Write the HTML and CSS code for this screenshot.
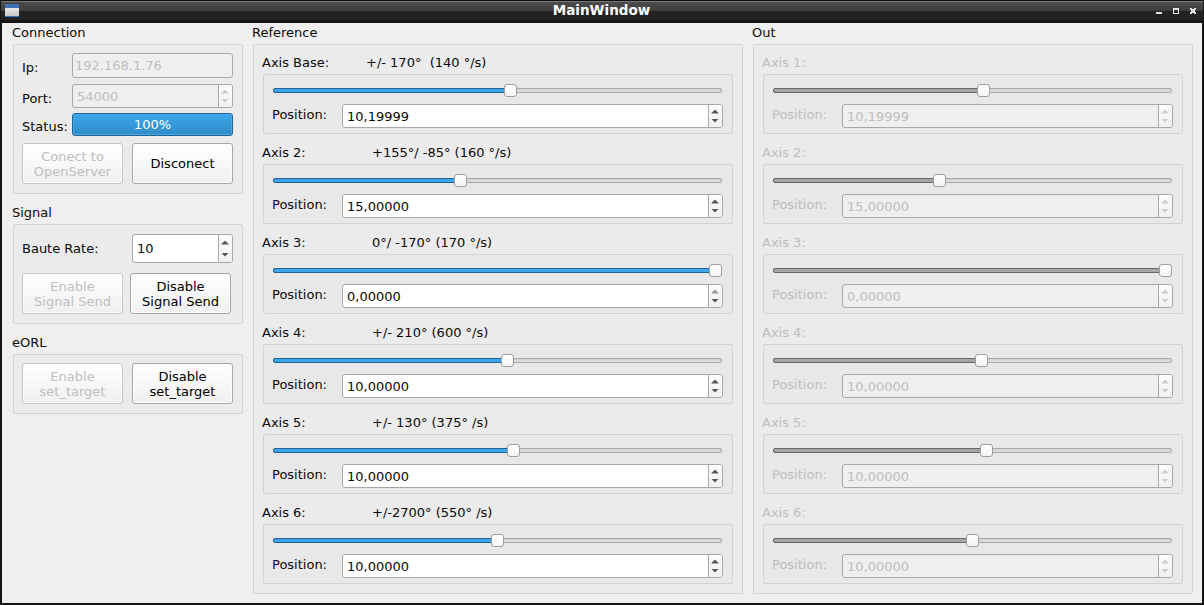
FILE: index.html
```html
<!DOCTYPE html>
<html lang="en">
<head>
<meta charset="utf-8">
<title>MainWindow</title>
<link rel="stylesheet" href="styles.css">
</head>
<body>
<div class="window">
  <header class="titlebar">
    <span class="app-icon"></span>
    <span class="title">MainWindow</span>
    <svg class="controls" width="42" height="8" viewBox="0 0 42 8" shape-rendering="crispEdges" fill="#e2e2dc">
      <path d="M0 4h6v2H0z"/>
      <path fill-rule="evenodd" d="M17 0h6v6h-6zM18 2v3h4V2z"/>
      <path d="M34 0h2v1h2V0h2v2h-1v2h1v2h-2V5h-2v1h-2V4h1V2h-1z"/>
    </svg>
  </header>
  <main class="content">
    <div class="side">
      <section class="group">
        <h2 class="group-title">Connection</h2>
        <div class="frame connection">
          <div class="row row-ip"><label class="name">Ip:</label><div class="field disabled ip">192.168.1.76</div></div>
          <div class="row row-port"><label class="name">Port:</label><div class="field disabled spin"><span class="value">54000</span><span class="steps"><i class="up"></i><i class="down"></i></span></div></div>
          <div class="row row-status"><label class="name">Status:</label><div class="progress">100%</div></div>
          <div class="buttons"><button class="button" disabled>Conect to<br>OpenServer</button><button class="button">Disconect</button></div>
        </div>
      </section>
      <section class="group">
        <h2 class="group-title">Signal</h2>
        <div class="frame signal">
          <div class="row row-rate"><label class="name wide">Baute Rate:</label><div class="field spin"><span class="value">10</span><span class="steps"><i class="up"></i><i class="down"></i></span></div></div>
          <div class="buttons tight"><button class="button" disabled>Enable<br>Signal Send</button><button class="button">Disable<br>Signal Send</button></div>
        </div>
      </section>
      <section class="group">
        <h2 class="group-title">eORL</h2>
        <div class="frame eorl">
          <div class="buttons"><button class="button" disabled>Enable<br>set_target</button><button class="button">Disable<br>set_target</button></div>
        </div>
      </section>
    </div>
    <section class="group reference">
      <h2 class="group-title">Reference</h2>
      <div class="frame axes" id="reference"></div>
    </section>
    <section class="group out">
      <h2 class="group-title">Out</h2>
      <div class="frame axes" id="out"></div>
    </section>
  </main>
</div>
<script src="app.js"></script>
</body>
</html>
```
FILE: app.js
```js
// Each axis: label, range text, displayed position, slider fill in pixels.
const reference = [
  ['Axis Base:', '+/- 170°\u00a0 (140 °/s)', '10,19999', 231],
  ['Axis 2:', '+155°/ -85° (160 °/s)', '15,00000', 181],
  ['Axis 3:', '0°/ -170° (170 °/s)', '0,00000', 436],
  ['Axis 4:', '+/- 210° (600 °/s)', '10,00000', 228],
  ['Axis 5:', '+/- 130° (375° /s)', '10,00000', 234],
  ['Axis 6:', '+/-2700° (550° /s)', '10,00000', 218],
];
const out = [
  ['Axis 1:', '', '10,19999', 204],
  ['Axis 2:', '', '15,00000', 160],
  ['Axis 3:', '', '0,00000', 386],
  ['Axis 4:', '', '10,00000', 202],
  ['Axis 5:', '', '10,00000', 207],
  ['Axis 6:', '', '10,00000', 193],
];

function render(id, axes, disabled) {
  const off = disabled ? ' disabled' : '';
  document.getElementById(id).innerHTML = axes.map(([name, range, value, fill], i) => `
    <section class="group axis${off}">
      <h3 class="group-title"><span class="axis-name${i === 0 ? ' base' : ''}">${name}</span><span class="range">${range}</span></h3>
      <div class="frame inner">
        <div class="slider"><div class="groove"><div class="fill" style="width:${fill + 5}px"></div></div><span class="handle" style="left:${fill}px"></span></div>
        <div class="position"><label class="name">Position:</label><div class="field spin${off}"><span class="value">${value}</span><span class="steps"><i class="up${value === '0,00000' ? ' max' : ''}"></i><i class="down"></i></span></div></div>
      </div>
    </section>`).join('');
}

render('reference', reference, false);
render('out', out, true);
```
FILE: styles.css
```css
* { box-sizing: border-box; }
body {
  margin: 0;
  font: 13px/15px "DejaVu Sans", sans-serif;
  color: #0a0a0a;
}
.window {
  width: 1204px;
  height: 605px;
  display: flex;
  flex-direction: column;
  background: #151515;
  padding: 0 2px 2px;
  overflow: hidden;
}
.titlebar {
  flex: none;
  height: 23px;
  margin: 0 -1px;
  padding: 0 5px 0 4px;
  display: flex;
  align-items: flex-start;
  background: linear-gradient(#101010 0 1px, #777 1px 2px, #4d4d4d 2px, #3c3c3c 11px, #222 11px 20px, #151515 20px);
}
.app-icon {
  width: 14px;
  height: 13px;
  margin-top: 4px;
  background: linear-gradient(#3f6fb4 0 4px, #e6e6e6 4px, #c8c8c8 12px, #3f6fb4 12px);
}
.title {
  flex: 1;
  padding: 3px 0 0 28px;
  text-align: center;
  font-weight: bold;
  font-size: 13.5px;
  line-height: 14px;
  color: #fff;
}
.controls { margin-top: 8px; }
.content {
  flex: 1;
  display: flex;
  gap: 9px;
  padding: 0 9px 9px 10px;
  background: #efefef;
}
.side, .axes {
  display: flex;
  flex-direction: column;
  gap: 9px;
}
.side { width: 231px; }
.reference { width: 491px; }
.out { width: 441px; }
.group-title {
  margin: 0;
  height: 21px;
  padding-top: 2px;
  display: flex;
  font-size: 13px;
  font-weight: normal;
}
.frame {
  margin-left: 1px;
  padding: 8px 9px 8px 8px;
  border: 1px solid #d3d3d3;
  border-radius: 2px;
  background: #ebebeb;
}
.connection { height: 150px; }
.signal { height: 100px; padding-top: 9px; }
.eorl { height: 60px; }
.row { display: flex; }
.row .name { width: 50px; }
.row .name.wide { width: 110px; padding-top: 7px; }
.row .field, .row .progress { flex: 1; }
.row-ip { height: 25px; margin-bottom: 6px; }
.row-ip .name { padding-top: 7px; }
.row-port { height: 24px; margin-bottom: 5px; }
.row-port .name { padding-top: 7px; }
.row-status { height: 23px; margin-bottom: 7px; }
.row-status .name { padding-top: 6px; }
.row-rate { height: 29px; margin-bottom: 10px; }
.field {
  border: 1px solid #a8a8a8;
  border-radius: 3px;
  background: #fff;
}
.field.disabled { background: #efefef; color: #bebebe; }
.ip { padding: 4px 0 0 2px; }
.spin { display: flex; align-items: stretch; }
.value { flex: 1; align-self: center; padding: 1px 0 0 4px; }
.row-rate .value { padding-top: 0; }
.steps {
  width: 15px;
  padding-right: 1px;
  border-left: 1px solid #a8a8a8;
  border-radius: 0 2px 2px 0;
  background: linear-gradient(#fdfdfd, #f0f0f0);
  display: flex;
  flex-direction: column;
  align-items: center;
  justify-content: center;
  gap: 5px;
}
.row-rate .steps { gap: 8px; }
.steps { width: 14px; padding-right: 1px; }
.up, .down {
  width: 8px;
  height: 4px;
  background: #555;
}
.up { clip-path: polygon(50% 0, 100% 100%, 0 100%); }
.down { clip-path: polygon(0 0, 100% 0, 50% 100%); }
.disabled .up, .disabled .down { background: #ccc; }
.up.max { background: #999; }
.disabled .up.max { background: #ccc; }
.progress {
  border: 1px solid #1f6396;
  border-radius: 3px;
  background: linear-gradient(#3ba6ec, #308cc6);
  box-shadow: inset 0 0 0 1px #4ba8e2;
  color: #fff;
  text-align: center;
  padding-top: 3px;
}
.buttons { display: flex; gap: 9px; }
.buttons.tight { gap: 7px; }
.button {
  flex: none;
  width: 101px;
  height: 41px;
  padding: 0;
  border: 1px solid #a8a8a8;
  border-radius: 3px;
  background: linear-gradient(#fff, #f0f0f0);
  box-shadow: inset 0 0 0 1px #fbfbfb;
  font: inherit;
  color: #000;
}
.button:disabled { color: #bebebe; border-color: #c6c6c6; }
.axes { height: 550px; }
.axis.disabled { color: #bebebe; }
.axis-name { width: 110px; }
.axis-name.base { width: 104px; }
.inner {
  height: 60px;
  padding: 9px 9px 0 8px;
  background: #e8e8e8;
}
.slider {
  position: relative;
  height: 13px;
  margin-left: 1px;
  padding-top: 4px;
  margin-right: 1px;
}
.groove {
  height: 5px;
  border: 1px solid #a8a8a8;
  border-radius: 2px;
  background: linear-gradient(#d0d0d0, #e2e2e2);
}
.fill {
  height: 5px;
  margin: -1px;
  border: 1px solid #1f6396;
  border-radius: 2px;
  background: #3da5e8;
}
.disabled .fill { border-color: #686868; background: #a6a6a6; }
.handle {
  position: absolute;
  top: 0;
  width: 13px;
  height: 13px;
  border: 1px solid #a0a0a0;
  border-radius: 3px;
  background: linear-gradient(#fff, #f3f3f3);
}
.position {
  display: flex;
  height: 24px;
  margin-top: 7px;
}
.position .name { width: 70px; padding-top: 3px; }
.position .field { flex: 1; }
```
